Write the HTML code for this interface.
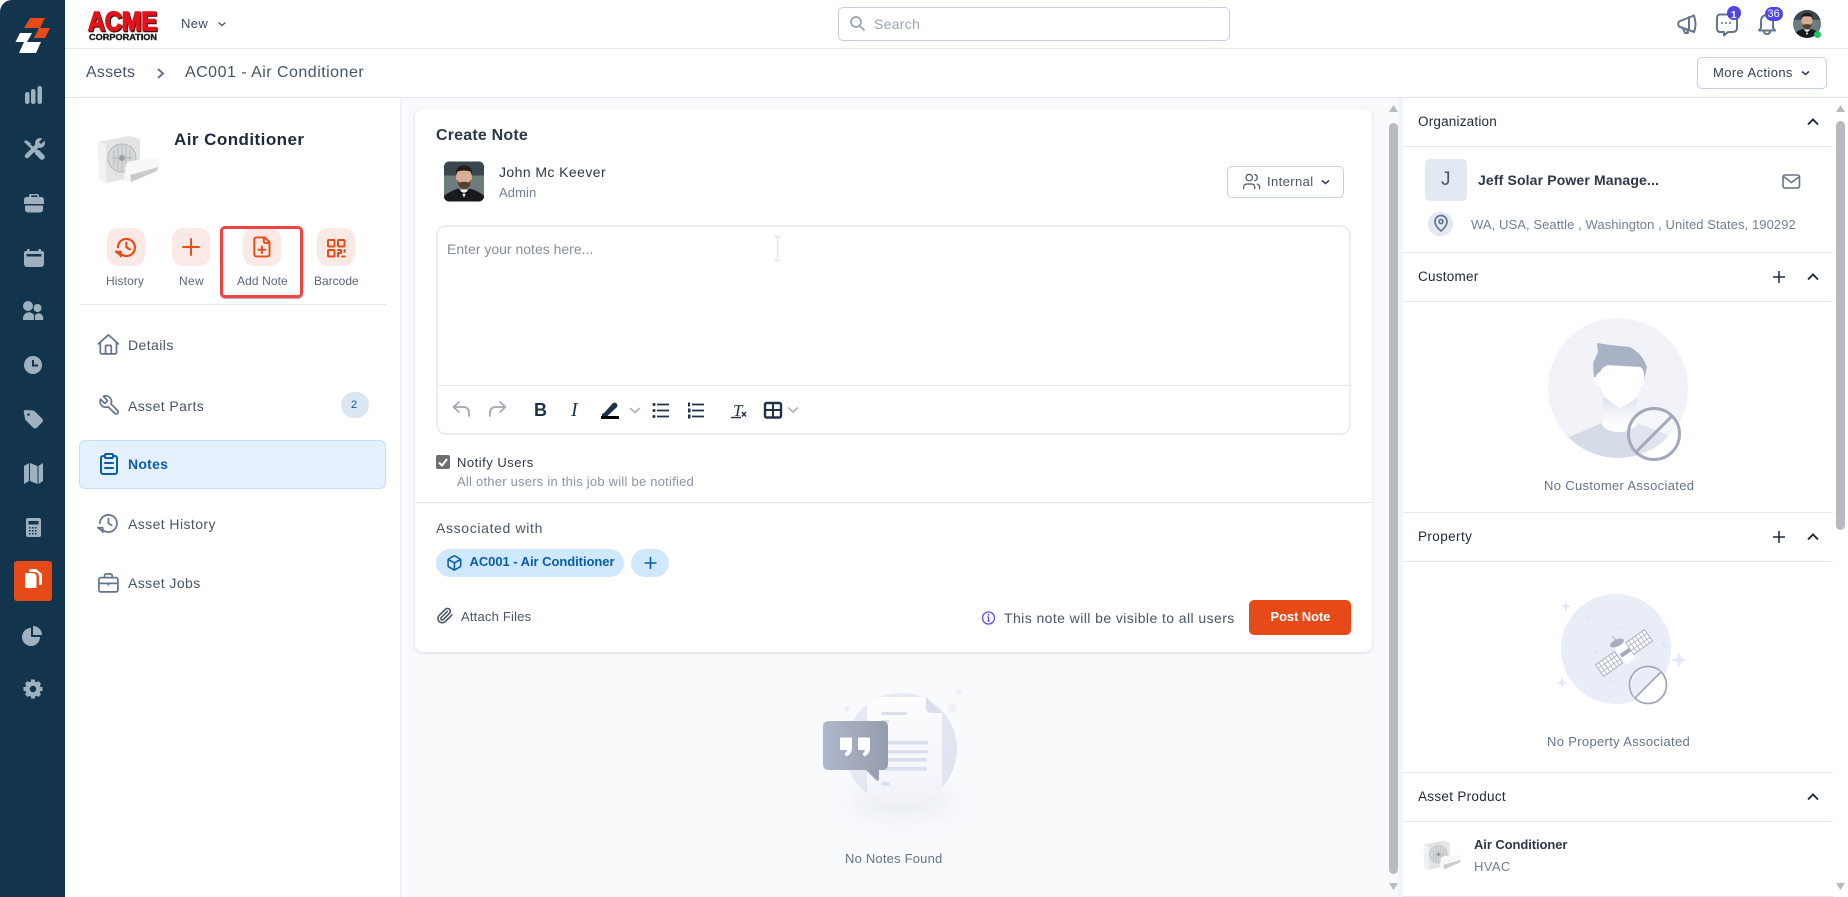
<!DOCTYPE html>
<html lang="en"><head><meta charset="utf-8"><title>Asset Notes</title>
<style>
html,body{margin:0;padding:0;width:1848px;height:897px;overflow:hidden;background:#fff;font-family:"Liberation Sans",sans-serif}
.b{position:absolute;box-sizing:border-box}
.t{position:absolute;white-space:nowrap;line-height:20px;height:20px;letter-spacing:.03em}
.hr{position:absolute;height:1px;background:#e2e8f0}
</style></head><body>

<!-- boxes -->
<div class="b" style="left:0;top:0;width:65px;height:897px;background:#12344d;border-top-left-radius:12px"></div>
<div class="hr" style="left:65px;top:48px;width:1783px;background:#e2e8f2"></div>
<div class="hr" style="left:65px;top:97px;width:1783px;background:#e2e8f0"></div>
<div class="b" style="left:400px;top:98px;width:998px;height:799px;background:#f8fafc;border-left:2px solid #eef1f6"></div>
<div class="b" style="left:1398px;top:98px;width:5px;height:799px;background:#f1f4f9"></div>
<div class="b" style="left:838px;top:7px;width:392px;height:34px;border:1px solid #c5d1e2;border-radius:5px;background:#fff"></div>
<div class="b" style="left:1697px;top:57px;width:130px;height:32px;border:1px solid #c5d1e2;border-radius:5px;background:#fff"></div>

<!-- left -->
<div class="b" style="left:107px;top:228px;width:38px;height:38px;border-radius:11px;background:#fbe9e5"></div>
<div class="b" style="left:172px;top:228px;width:38px;height:38px;border-radius:11px;background:#fbe9e5"></div>
<div class="b" style="left:243px;top:228px;width:38px;height:38px;border-radius:11px;background:#fbe9e5"></div>
<div class="b" style="left:317px;top:228px;width:38px;height:38px;border-radius:11px;background:#fbe9e5"></div>
<div class="b" style="left:220px;top:226px;width:83px;height:72px;border:3px solid #ef4444;border-radius:5px;box-shadow:0 1px 1px rgba(0,0,0,.35)"></div>
<div class="hr" style="left:79px;top:304px;width:307px"></div>
<div class="b" style="left:341px;top:392px;width:28px;height:26px;border-radius:13px;background:#dbe6f3"></div>
<div class="b" style="left:79px;top:440px;width:307px;height:49px;background:#e4f1fc;border:1px solid #c4e0f9;border-radius:6px"></div>

<!-- card -->
<div class="b" style="left:415px;top:109px;width:957px;height:543px;background:#fff;border-radius:8px;box-shadow:0 1px 3px rgba(30,50,80,.16)"></div>
<div class="b" style="left:1227px;top:166px;width:117px;height:32px;border:1px solid #c5d1e2;border-radius:5px"></div>
<div class="b" style="left:436px;top:225px;width:915px;height:210px;border:2px solid #eceef1;border-radius:10px"></div>
<div class="hr" style="left:438px;top:385px;width:911px;background:#e3e5e8"></div>
<div class="hr" style="left:415px;top:502px;width:957px"></div>
<div class="b" style="left:436px;top:549px;width:188px;height:28px;border-radius:14px;background:#d0e8fb"></div>
<div class="b" style="left:631px;top:549px;width:38px;height:28px;border-radius:14px;background:#d0e8fb"></div>
<div class="b" style="left:1249px;top:600px;width:102px;height:35px;border-radius:5px;background:#e64a19"></div>

<!-- right -->
<div class="hr" style="left:1403px;top:146px;width:430px"></div>
<div class="hr" style="left:1403px;top:252px;width:430px"></div>
<div class="hr" style="left:1403px;top:301px;width:430px"></div>
<div class="hr" style="left:1403px;top:512px;width:430px"></div>
<div class="hr" style="left:1403px;top:561px;width:430px"></div>
<div class="hr" style="left:1403px;top:772px;width:430px"></div>
<div class="hr" style="left:1403px;top:821px;width:430px"></div>
<div class="hr" style="left:1403px;top:896px;width:430px"></div>
<div class="b" style="left:1425px;top:159px;width:42px;height:42px;border-radius:5px;background:#e3e9f2"></div>
<div class="b" style="left:1428px;top:212px;width:25px;height:24px;border-radius:12px;background:#e3e9f2"></div>

<!-- scrollbars -->
<div class="b" style="left:1389px;top:123px;width:9px;height:751px;border-radius:5px;background:#b9b9c0"></div>
<div class="b" style="left:1836px;top:121px;width:9px;height:409px;border-radius:5px;background:#b9b9c0"></div>

<!-- icons layer -->
<svg width="1848" height="897" viewBox="0 0 1848 897" style="position:absolute;left:0;top:0">
<defs>
<clipPath id="cp1"><circle cx="1618" cy="388" r="70"/></clipPath>
<clipPath id="cp2"><circle cx="901" cy="749" r="56"/></clipPath>
<linearGradient id="gn" x1="0" y1="0" x2="0" y2="1"><stop offset="0" stop-color="#dfe3ee"/><stop offset="1" stop-color="#fff"/></linearGradient>
<linearGradient id="gb" x1="0" y1="0" x2="1" y2="0"><stop offset="0" stop-color="#afb7cb"/><stop offset="1" stop-color="#959cad"/></linearGradient>
<linearGradient id="gc" x1="0" y1="0" x2="1" y2="1"><stop offset="0" stop-color="#e9ecf5"/><stop offset="1" stop-color="#dde2ef"/></linearGradient>
<linearGradient id="gd" x1="0" y1="0" x2="0" y2="1"><stop offset="0" stop-color="#fdfdfe"/><stop offset="1" stop-color="#f0f2f8"/></linearGradient>
<filter id="bl" x="-50%" y="-100%" width="200%" height="300%"><feGaussianBlur stdDeviation="12"/></filter>
<symbol id="ac" viewBox="0 0 63 48">
 <path d="M1 7 32 1 43 4V41L9 48 2 44Z" fill="#e2e4e5"/>
 <path d="M1 7 9 9V48L2 44Z" fill="#f1f2f3"/>
 <circle cx="25" cy="23" r="14" fill="#d6d9da" stroke="#b4b8bb" stroke-width="1"/>
 <path d="M15 23h20M17 15v16M21 11v24M25 10v26M29 11v24M33 15v16" stroke="#b2b6b9" stroke-width=".9"/><circle cx="25" cy="23" r="3" fill="#9a9ea1"/>
 <path d="M29 30Q29 27 34 26L60 23Q63 24 62 31Q62 34 60 36L34 47Q28 48 27 42Z" fill="#f8f8f9"/><path d="M33 40 61 32 60 36 34 47Z" fill="#c9ccce"/>
</symbol>
<symbol id="man" viewBox="0 0 40 40">
 <rect width="40" height="40" fill="#6e7d7c"/><rect width="40" height="14" fill="#39484f"/>
 <path d="M0 40V34Q8 29 14 27L20 31 26 27Q33 29 40 34V40Z" fill="#171b1f"/>
 <path d="M16 28h8l-4 8Z" fill="#eceded"/><path d="M15.500 29.500l4.500 2 4.500-2v4l-4.500-1.500-4.500 1.500Z" fill="#0a0a0a"/>
 <ellipse cx="20" cy="16" rx="8" ry="11" fill="#d6ad95"/>
 <path d="M12 14Q11 4 20 4t8 10L26.500 10Q20 8 13.500 10Z" fill="#241b16"/>
 <path d="M12.500 18Q14 27 20 27.500T27.500 18L25 21Q20 19.500 15 21Z" fill="#54402f"/>
</symbol>
</defs>

<!-- sidebar logo -->
<g fill="#e64a19"><polygon points="24,28 30,18 45,18 40,28"/><polygon points="34,38 39,28 50,28 45,38"/></g>
<g fill="#fff"><polygon points="15.5,42 20,33 32,33 27,42"/><polygon points="19,53 24,42 41,42 36,53"/></g>

<!-- sidebar icons -->
<g fill="#9fb0bf">
 <rect x="25" y="92" width="4.500" height="12" rx="2.200"/><rect x="31" y="89" width="4.500" height="15" rx="2.200"/><rect x="37.500" y="86" width="4.500" height="18" rx="2.200"/>
 <g fill="none" stroke="#9fb0bf"><path d="M27 143l13 12" stroke-width="2.800"/><path d="M37.500 152.500l4.500 4.500" stroke-width="5.500" stroke-linecap="round"/><path d="M27 156l11-11" stroke-width="4.500" stroke-linecap="round"/></g>
 <path d="M24 142l2-2 5 3.500-2.500 2.500Z"/><circle cx="40" cy="143" r="5"/><path d="M40 143l4-4" stroke="#12344d" stroke-width="3"/>
 <path d="M29 197v-1a2 2 0 0 1 2-2h6a2 2 0 0 1 2 2v1h-1.600v-1a.6.6 0 0 0-.6-.6h-5a.6.6 0 0 0-.6.6v1Z"/>
 <path d="M24 199.500a3 3 0 0 1 3-2.500h14a3 3 0 0 1 3 2.500v4.500H24Z"/><path d="M25 205.500h18v4a3 3 0 0 1-3 3H28a3 3 0 0 1-3-3Z"/>
 <path d="M27 251v-2h2.500v2h9v-2H41v2h1a2 2 0 0 1 2 2v11a3 3 0 0 1-3 3H27a3 3 0 0 1-3-3v-11a2 2 0 0 1 2-2Z"/><rect x="26.500" y="254" width="15" height="2.500" fill="#12344d"/>
 <circle cx="28" cy="306" r="5"/><circle cx="37.500" cy="308" r="4"/><path d="M23 320v-2a6 6 0 0 1 11-3v5Z"/><path d="M35 320v-5q3-3 6-1 3 2 2 6Z"/>
 <circle cx="33" cy="365" r="9"/><path d="M33 360v5.500h5" stroke="#12344d" stroke-width="2" fill="none"/>
 <path d="M24 413a2 2 0 0 1 2-3l7 .5q1 0 2 1l7 7q2 2 0 4l-5 5q-2 2-4 0l-7-7q-1-1-1-2Z"/><circle cx="28.500" cy="414.500" r="1.300" fill="#12344d"/>
 <path d="M24 466l5-3v18l-5 3Zm6-3 7.500 3v18l-7.500-3Zm8.500 3 4.500-3v18l-4.500 3Z"/>
 <rect x="26" y="518" width="15" height="19" rx="2"/><rect x="28.500" y="521" width="10" height="3.500" fill="#12344d"/><g fill="#12344d"><rect x="29" y="527" width="1.500" height="1.500"/><rect x="32" y="527" width="1.500" height="1.500"/><rect x="35" y="527" width="1.500" height="1.500"/><rect x="29" y="530" width="1.500" height="1.500"/><rect x="32" y="530" width="1.500" height="1.500"/><rect x="35" y="530" width="1.500" height="1.500"/><rect x="29" y="533" width="1.500" height="1.500"/><rect x="32" y="533" width="1.500" height="1.500"/><rect x="35" y="533" width="1.500" height="1.500"/></g>
 <path d="M31 628v9h9a9 9 0 1 1-9-9Z"/><path d="M33 626a9 9 0 0 1 9 9h-9Z"/>
 <g transform="translate(33,689)"><circle r="5.500" fill="none" stroke="#9fb0bf" stroke-width="4.500"/><path d="M-2-9.500h4v3h-4Zm0 16h4v3h-4Zm-7.500-8.500h3v4h-3Zm16 0h3v4h-3Z"/><path d="M-2-9.500h4v3h-4Zm0 16h4v3h-4Zm-7.500-8.500h3v4h-3Zm16 0h3v4h-3Z" transform="rotate(45)"/></g>
</g>
<rect x="14" y="561" width="38" height="40" rx="3" fill="#e64a19"/>
<path d="M29 572v-1a2 2 0 0 1 2-2h5l6 5v9a2 2 0 0 1-2 2h-1V577q0-5-5-5Z" fill="#fff"/><path d="M27 572.500h3q5 0 6.600 2 .4 1 .4 2.500v9.500q0 2-2 2H27a2.500 2.500 0 0 1-2.500-2.500V575a2.500 2.500 0 0 1 2.500-2.500Z" fill="#fff" stroke="#e64a19" stroke-width="1"/>

<!-- ACME -->
<text x="88" y="30.500" font-family="Liberation Sans" font-weight="bold" font-size="27" fill="#e2131a" stroke="#e2131a" stroke-width="1.500" textLength="69" lengthAdjust="spacingAndGlyphs" style="filter:drop-shadow(1px 1px 0 #2a0505)">ACME</text>
<text x="89" y="40" font-family="Liberation Sans" font-weight="bold" font-size="8.500" fill="#222" stroke="#222" stroke-width=".4" textLength="68" lengthAdjust="spacingAndGlyphs">CORPORATION</text>

<!-- top chevrons etc -->
<path d="M218.500 22.500l3.500 3 3.500-3" fill="none" stroke="#475569" stroke-width="1.300"/>
<path d="M158 69l5 4.500-5 4.500" fill="none" stroke="#64748b" stroke-width="2"/>
<g fill="none" stroke="#94a3b8" stroke-width="1.700"><circle cx="856" cy="22" r="5"/><path d="M860 26l4.500 4.500"/></g>
<g fill="none" stroke="#64748b" stroke-width="2" stroke-linejoin="round" stroke-linecap="round">
 <path d="M1679 21.500 1694 15.500q1.500 6 1.500 9t-1.500 7.500l-15-5.500q-1.500-2.500 0-5Z"/><path d="M1689 17v13M1683 28.500l2 4.500h3l-1-3.500"/>
 <path d="M1720 14.500h12q5 0 5 4.500v9q0 4-5 4h-4l-4 3.500v-3.500h-4q-3 0-3-4v-9.500q0-4 3-4Z"/>
 <path d="M1767 15q-6 0-6 7v6l-2 2.500h16l-2-2.500v-6q0-7-6-7ZM1764 31q0 3 3 3t3-3"/>
</g>
<g fill="#64748b"><circle cx="1722" cy="23" r="1"/><circle cx="1726" cy="23" r="1"/><circle cx="1730" cy="23" r="1"/></g>
<circle cx="1734" cy="13" r="7" fill="#4f46e5"/>
<rect x="1765" y="7" width="18" height="14" rx="7" fill="#4f46e5"/>
<svg x="1793" y="10" width="28" height="28" viewBox="0 0 40 40"><clipPath id="av"><circle cx="20" cy="20" r="20"/></clipPath><g clip-path="url(#av)"><use href="#man" width="40" height="40"/></g></svg>
<circle cx="1817.500" cy="34.500" r="3.500" fill="#22c55e"/>
<path d="M1802 71.500l3.500 3 3.500-3" fill="none" stroke="#334155" stroke-width="1.600"/>

<!-- asset image -->
<use href="#ac" x="97" y="135" width="63" height="48"/>

<!-- action icons -->
<g fill="none" stroke="#e64a19" stroke-width="2.200" stroke-linecap="round" stroke-linejoin="round">
 <g transform="translate(115,236) scale(.95)"><path d="M3 12a9 9 0 1 1 2.600 6.400"/><path d="M1 16.500h5v5M1 16.500l4 3"/><path d="M12 7v5l3.500 2"/></g>
 <path d="M183 247h16M191 239v16" stroke-width="1.900"/>
 <g transform="translate(250.500,235.500) scale(.95)" stroke-width="2"><path d="M15 2H6a2 2 0 0 0-2 2v16a2 2 0 0 0 2 2h12a2 2 0 0 0 2-2V7Z"/><path d="M14 2v4a2 2 0 0 0 2 2h4"/><path d="M8.500 15h7M12 11.500v7"/></g>
 <g stroke-width="2"><rect x="328" y="240" width="6.500" height="6.500" rx="1"/><rect x="338" y="240" width="6.500" height="6.500" rx="1"/><rect x="328" y="250" width="6.500" height="6.500" rx="1"/><path d="M338 250h3v3h-3v3.500M344.500 250v2M342 256.500h2.500"/></g>
</g>

<!-- nav icons -->
<g fill="none" stroke="#64748b" stroke-width="1.800" stroke-linecap="round" stroke-linejoin="round">
 <g transform="translate(97,333) scale(.95)"><path d="M15 22v-8a1 1 0 0 0-1-1h-4a1 1 0 0 0-1 1v8"/><path d="M1.500 11.500 12 2l10.500 9.500M3.500 10v10.500a1.500 1.500 0 0 0 1.500 1.500h14a1.500 1.500 0 0 0 1.500-1.500V10"/></g>
 <g transform="translate(121,394) scale(-.95,.95)"><path d="M14.700 6.300a1 1 0 0 0 0 1.400l1.600 1.600a1 1 0 0 0 1.400 0l3.770-3.770a6 6 0 0 1-7.940 7.940l-6.910 6.910a2.120 2.120 0 0 1-3-3l6.910-6.910a6 6 0 0 1 7.940-7.940l-3.760 3.760z"/></g>
 <g transform="translate(97,512) scale(.95)"><path d="M3 12a9 9 0 1 1 2.600 6.400"/><path d="M1 16.500h5v5M1 16.500l4 3"/><path d="M12 7v5l3.500 2"/></g>
 <g transform="translate(97,571) scale(.95)"><rect x="2" y="7" width="20" height="15" rx="2"/><path d="M16 7V5a2 2 0 0 0-2-2h-4a2 2 0 0 0-2 2v2"/><path d="M2 13h20"/><path d="M12 13v1.500" stroke-width="2"/></g>
</g>
<g fill="none" stroke="#0a5ca8" stroke-width="2" stroke-linecap="round" stroke-linejoin="round" transform="translate(97,452) scale(1)"><rect x="8" y="2" width="8" height="4" rx="1"/><path d="M16 4h2a2 2 0 0 1 2 2v14a2 2 0 0 1-2 2H6a2 2 0 0 1-2-2V6a2 2 0 0 1 2-2h2"/><path d="M8 11h8M8 16h8"/></g>

<!-- card avatar / internal -->
<svg x="444" y="161" width="40" height="41" viewBox="0 0 40 40"><clipPath id="av2"><rect width="40" height="40" rx="5"/></clipPath><g clip-path="url(#av2)"><use href="#man" width="40" height="40"/></g></svg>
<g fill="none" stroke="#475569" stroke-width="1.500" stroke-linecap="round" transform="translate(1242,172) scale(.8)"><path d="M16 21v-2a4 4 0 0 0-4-4H6a4 4 0 0 0-4 4v2"/><circle cx="9" cy="7" r="4"/><path d="M22 21v-2a4 4 0 0 0-3-3.870"/><path d="M16 3.130a4 4 0 0 1 0 7.750"/></g>
<path d="M1322 180.500l3.500 3 3.500-3" fill="none" stroke="#334155" stroke-width="1.600"/>

<!-- I beam -->
<path d="M774 236.500h7M774 260.500h7M777.500 237v23" stroke="#e6e9ec" stroke-width="1.500" fill="none"/>

<!-- toolbar -->
<g fill="none" stroke="#a4a9b2" stroke-width="1.800" stroke-linecap="round" stroke-linejoin="round">
 <path d="M459 402l-5.500 5 5.500 5M454 407h9q6 0 6 6v3"/>
 <path d="M500 402l5.500 5-5.500 5M505 407h-9q-6 0-6 6v3"/>
</g>
<text x="534" y="416" font-family="Liberation Sans" font-weight="bold" font-size="18" fill="#1e3247">B</text>
<text x="571" y="416" font-family="Liberation Serif" font-style="italic" font-size="20" fill="#1e3247">I</text>
<path d="M602 414l2-1 9-10q2-1 3.500.5t.5 3.500l-9 8.500-1 2h-5Z" fill="#1e3247"/>
<rect x="601" y="416" width="18" height="3" fill="#000"/>
<path d="M630 408l5 4.500 5-4.500M788 407.500l5 4.500 5-4.500" fill="none" stroke="#a4a9b2" stroke-width="1.500"/>
<g fill="none" stroke="#1e3247" stroke-width="1.800"><path d="M657 404.500h12M657 410.500h12M657 416.500h12M692 404.500h12M692 410.500h12M692 416.500h12"/></g>
<g fill="#1e3247"><circle cx="654" cy="404.500" r="1.500"/><circle cx="654" cy="410.500" r="1.500"/><circle cx="654" cy="416.500" r="1.500"/><rect x="688" y="402.500" width="2" height="4"/><rect x="688" y="408.500" width="2.500" height="4"/><rect x="688" y="414.500" width="2.500" height="4"/></g>
<text x="733" y="416" font-family="Liberation Serif" font-style="italic" font-size="17" fill="#1e3247">T</text>
<path d="M731 417.500h10" stroke="#1e3247" stroke-width="1.400"/><path d="M742 412l4 4.500M746 412l-4 4.500" stroke="#1e3247" stroke-width="1.400"/>
<rect x="765" y="403" width="16" height="14.500" rx="1.500" fill="none" stroke="#1e3247" stroke-width="2.400"/><path d="M765 410h16M773 403v14" stroke="#1e3247" stroke-width="2"/>

<!-- checkbox -->
<rect x="436" y="455" width="14" height="14" rx="2" fill="#6e6e6e"/>
<path d="M439 462.500l3 3 5-6.500" fill="none" stroke="#fff" stroke-width="2"/>

<!-- chip icons -->
<g fill="none" stroke="#0a5ca8" stroke-width="1.700" stroke-linejoin="round" transform="translate(446,554.500) scale(.7)"><path d="M21 8a2 2 0 0 0-1-1.730l-7-4a2 2 0 0 0-2 0l-7 4A2 2 0 0 0 3 8v8a2 2 0 0 0 1 1.730l7 4a2 2 0 0 0 2 0l7-4A2 2 0 0 0 21 16Z" stroke-width="2.200"/><path d="M3.300 7 12 12l8.700-5M12 22V12" stroke-width="2.200"/></g>
<path d="M644.500 563h12M650.500 557v12" stroke="#0a5ca8" stroke-width="1.600" fill="none"/>
<g fill="none" stroke="#4a5568" stroke-width="1.800" stroke-linecap="round" transform="translate(436.500,607) scale(.72)"><path d="M21.440 11.050l-9.190 9.190a6 6 0 0 1-8.490-8.490l8.570-8.570A4 4 0 1 1 18 8.840l-8.590 8.570a2 2 0 0 1-2.830-2.830l8.490-8.480" stroke-width="2.200"/></g>
<g fill="none" stroke="#5b50e8" stroke-width="1.300"><circle cx="988.500" cy="618" r="6"/><path d="M988.500 617v4M987.300 616.800h1.300M987.300 621h2.500"/></g><circle cx="988.500" cy="614.800" r=".9" fill="#5b50e8"/>

<!-- empty notes illustration -->
<ellipse cx="901" cy="802" rx="50" ry="14" fill="#c3ccdb" opacity=".3" filter="url(#bl)"/>
<circle cx="901" cy="749" r="56" fill="url(#gc)"/>
<circle cx="847" cy="709" r="3" fill="#eef1f8"/><circle cx="952" cy="708" r="4.500" fill="#eef1f8"/><circle cx="959" cy="692" r="3" fill="#eef1f8"/>
<g clip-path="url(#cp2)"><path d="M871 697h55l16 16v100h-75V701q0-4 4-4Z" fill="url(#gd)"/></g>
<path d="M926 697l16 16h-10q-6 0-6-6Z" fill="#d8deeb"/>
<g fill="#d9dfeb"><rect x="881" y="712" width="26" height="3" rx="1.500"/><rect x="881" y="720" width="8" height="3"/><rect x="881" y="741" width="47.500" height="3.500" rx="1.500"/><rect x="881" y="750" width="47.500" height="3.500" rx="1.500"/><rect x="881" y="758" width="46" height="3.500" rx="1.500"/><rect x="881" y="767" width="46" height="3.500" rx="1.500"/><rect x="881" y="782" width="8.500" height="3.500" rx="1"/></g>
<path d="M829 721h53q6 0 6 6v37q0 6-6 6h-3v9q0 3-3 1l-10-10h-37q-6 0-6-6v-37q0-6 6-6Z" fill="url(#gb)"/>
<g fill="#fff"><path d="M840 737.500h12v10q0 7-6 9l-1.500-3q2-1 2.500-3.500h-7Z"/><path d="M858 737.500h12v10q0 7-6 9l-1.500-3q2-1 2.500-3.500h-7Z"/></g>

<!-- right panel icons -->
<g fill="none" stroke="#1e293b" stroke-width="2">
 <path d="M1808 124.500l5-5 5 5M1808 279.500l5-5 5 5M1808 539.500l5-5 5 5M1808 799.500l5-5 5 5" stroke-width="1.900"/>
 <path d="M1773 277h12M1779 271v12M1773 537h12M1779 531v12" stroke-width="1.500"/>
</g>
<g fill="none" stroke="#64748b" stroke-width="1.600" stroke-linejoin="round"><rect x="1783" y="175" width="16.500" height="13" rx="2"/><path d="M1783.500 176.500l8 6 8-6"/></g>
<g fill="none" stroke="#64748b" stroke-width="1.700"><path d="M1441 231q-6-5-6-9.500a6 6 0 0 1 12 0q0 4.500-6 9.500Z"/><circle cx="1441" cy="221.500" r="2"/></g>

<!-- person illustration -->
<circle cx="1618" cy="388" r="70" fill="#f1f3f9"/>
<g clip-path="url(#cp1)">
 <path d="M1569 437 1602 423h35l31 12-20 30h-60Z" fill="#d6dbe8"/>
 <ellipse cx="1619" cy="423" rx="17" ry="9" fill="#fff"/>
 <rect x="1603" y="398" width="34" height="28" fill="url(#gn)"/>
</g>
<path d="M1597 343 1610 345 1630 347Q1642 354 1645 363L1647 367 1644 380 1640 367 1607 365 1602 377 1594 377 1593 363 1598 352Z" fill="#a9b2c5"/>
<path d="M1595 380q1-7 5-8 3-6 7-6l33 1q5 2 4 13 1 6-3 6-2 8-7 14l-14 8-13-9q-6-6-6-12-6-1-6-7Z" fill="#fff"/>
<circle cx="1654" cy="434" r="25.500" fill="rgba(255,255,255,.25)" stroke="#a3a9b9" stroke-width="3"/>
<path d="M1636 452 1672 416" stroke="#a3a9b9" stroke-width="3"/>

<!-- satellite illustration -->
<circle cx="1616" cy="649" r="55" fill="#e9edf8"/>
<g fill="#e4e8f4"><path d="M1566 601l1.500 4 4 1-4 1.500-1.500 4.500-1.500-4.500-4-1.500 4-1Z"/><path d="M1679 652l2 6 6 2-6 2-2 6-2-6-6-2 6-2Z"/><path d="M1562 677l1.500 4.500 4.500 1.500-4.500 1.500-1.500 4.500-1.500-4.500-4.500-1.500 4.500-1.500Z"/></g>
<g fill="#d8dded"><circle cx="1587" cy="617" r="1"/><circle cx="1622" cy="628" r="1"/><circle cx="1664" cy="645" r="1.500"/><circle cx="1611" cy="696" r="1"/><circle cx="1596" cy="652" r="1"/><circle cx="1610" cy="681" r="1"/></g>
<g transform="translate(1609,664) rotate(-35)"><rect x="-11.500" y="-7" width="23" height="14" fill="#fff" stroke="#a8afc0" stroke-width="1"/><path d="M-7.500-7v14M-3.500-7v14M.5-7v14M4.500-7v14M8-7v14M-11.500-2.500h23M-11.500 2.500h23" stroke="#a8afc0" stroke-width=".8"/></g>
<g transform="translate(1639,642) rotate(-35)"><rect x="-11.500" y="-7" width="23" height="14" fill="#fff" stroke="#a8afc0" stroke-width="1"/><path d="M-7.500-7v14M-3.500-7v14M.5-7v14M4.500-7v14M8-7v14M-11.500-2.500h23M-11.500 2.500h23" stroke="#a8afc0" stroke-width=".8"/></g>
<g transform="translate(1625,653) rotate(-35)"><rect x="-10" y="-6" width="20" height="12" fill="#fff" transform="rotate(90)"/><rect x="-5" y="-2" width="11" height="4" fill="#a0a7b8"/></g>
<ellipse cx="1617" cy="643" rx="7.500" ry="3.500" transform="rotate(-25 1617 643)" fill="#a9afc0"/><path d="M1612 636l6 6" stroke="#a9afc0" stroke-width="1.200"/>
<circle cx="1648" cy="685" r="18.500" fill="#fff" stroke="#a3a9b9" stroke-width="1.800"/>
<path d="M1648 685 1661 672A18.500 18.500 0 0 0 1635 698Z" fill="#e9edf8"/>
<path d="M1635 698 1661 672" stroke="#a3a9b9" stroke-width="1.800"/>
<use href="#ac" x="1423" y="840" width="39" height="30"/>

<!-- scrollbar arrows -->
<g fill="#b9b9c0"><path d="M1393.500 105l4.500 7h-9ZM1840.500 105l4.500 7h-9ZM1393.500 890l4.500-7h-9ZM1840.500 890l4.500-7h-9Z"/></g>
</svg>

<!-- text -->
<div class="t" style="left:181px;top:14px;font-size:13px;color:#3b4a63">New</div>
<div class="t" style="left:874px;top:14px;font-size:14px;color:#97a6ba;letter-spacing:.3px">Search</div>
<div class="t" style="left:1731px;top:6px;font-size:10px;font-weight:bold;color:#fff;letter-spacing:0">1</div>
<div class="t" style="left:1767.500px;top:4px;font-size:11px;color:#fff;letter-spacing:0">36</div>
<div class="t" style="left:86px;top:63px;font-size:16px;color:#475569;letter-spacing:.2px">Assets</div>
<div class="t" style="left:185px;top:63px;font-size:16px;color:#475569">AC001 - Air Conditioner</div>
<div class="t" style="left:1713px;top:63px;font-size:13px;color:#334155">More Actions</div>

<div class="t" style="left:174px;top:130px;font-size:17px;font-weight:bold;color:#1e293b;letter-spacing:.45px">Air Conditioner</div>
<div class="t" style="left:106px;top:271px;font-size:12px;color:#5a6779;letter-spacing:.1px">History</div>
<div class="t" style="left:179px;top:271px;font-size:12px;color:#5a6779">New</div>
<div class="t" style="left:237px;top:271px;font-size:12px;color:#5a6779;letter-spacing:.1px">Add Note</div>
<div class="t" style="left:314px;top:271px;font-size:12px;color:#5a6779;letter-spacing:0">Barcode</div>

<div class="t" style="left:128px;top:335px;font-size:14px;color:#475569">Details</div>
<div class="t" style="left:128px;top:396px;font-size:14px;color:#475569">Asset Parts</div>
<div class="t" style="left:351px;top:395px;font-size:11px;color:#0a5ca8">2</div>
<div class="t" style="left:128px;top:454px;font-size:14px;font-weight:bold;color:#0a5ca8;letter-spacing:.25px">Notes</div>
<div class="t" style="left:128px;top:514px;font-size:14px;color:#475569">Asset History</div>
<div class="t" style="left:128px;top:573px;font-size:14px;color:#475569">Asset Jobs</div>

<div class="t" style="left:436px;top:126px;font-size:16px;font-weight:bold;color:#2d3748;letter-spacing:.2px">Create Note</div>
<div class="t" style="left:499px;top:162px;font-size:14px;color:#2d3748">John Mc Keever</div>
<div class="t" style="left:499px;top:183px;font-size:13px;color:#718096;letter-spacing:.1px">Admin</div>
<div class="t" style="left:1267px;top:172px;font-size:13px;color:#475569">Internal</div>
<div class="t" style="left:447px;top:239px;font-size:14px;color:#868e99;letter-spacing:0">Enter your notes here...</div>
<div class="t" style="left:457px;top:453px;font-size:13px;color:#2d3748;letter-spacing:.5px">Notify Users</div>
<div class="t" style="left:457px;top:472px;font-size:13px;color:#8a94a6;letter-spacing:.23px">All other users in this job will be notified</div>
<div class="t" style="left:436px;top:518px;font-size:14px;color:#4a5568;letter-spacing:.65px">Associated with</div>
<div class="t" style="left:469.500px;top:552px;font-size:13px;font-weight:bold;color:#0a5ca8;letter-spacing:-.05px">AC001 - Air Conditioner</div>
<div class="t" style="left:461px;top:607px;font-size:13px;color:#4a5568;letter-spacing:.2px">Attach Files</div>
<div class="t" style="left:1004px;top:608px;font-size:14px;color:#4a5568">This note will be visible to all users</div>
<div class="t" style="left:1270.500px;top:607px;font-size:13px;font-weight:bold;color:#fff;letter-spacing:-.1px">Post Note</div>
<div class="t" style="left:845px;top:849px;font-size:13px;color:#64748b;letter-spacing:.2px">No Notes Found</div>

<div class="t" style="left:1418px;top:112px;font-size:13.500px;color:#1e293b;letter-spacing:.2px">Organization</div>
<div class="t" style="left:1441px;top:170px;font-size:19px;color:#475569;letter-spacing:0">J</div>
<div class="t" style="left:1478px;top:170px;font-size:14px;font-weight:bold;color:#2d3748;letter-spacing:.14px">Jeff Solar Power Manage...</div>
<div class="t" style="left:1471px;top:215px;font-size:13px;color:#718096;letter-spacing:.08px">WA, USA, Seattle , Washington , United States, 190292</div>
<div class="t" style="left:1418px;top:267px;font-size:13.500px;color:#1e293b;letter-spacing:.25px">Customer</div>
<div class="t" style="left:1544px;top:476px;font-size:13px;color:#64748b;letter-spacing:.33px">No Customer Associated</div>
<div class="t" style="left:1418px;top:527px;font-size:13.500px;color:#1e293b">Property</div>
<div class="t" style="left:1547px;top:732px;font-size:13px;color:#64748b;letter-spacing:.33px">No Property Associated</div>
<div class="t" style="left:1418px;top:787px;font-size:13.500px;color:#1e293b;letter-spacing:.3px">Asset Product</div>
<div class="t" style="left:1474px;top:835px;font-size:13px;font-weight:bold;color:#2d3748;letter-spacing:-.08px">Air Conditioner</div>
<div class="t" style="left:1474px;top:857px;font-size:13px;color:#718096">HVAC</div>

</body></html>
